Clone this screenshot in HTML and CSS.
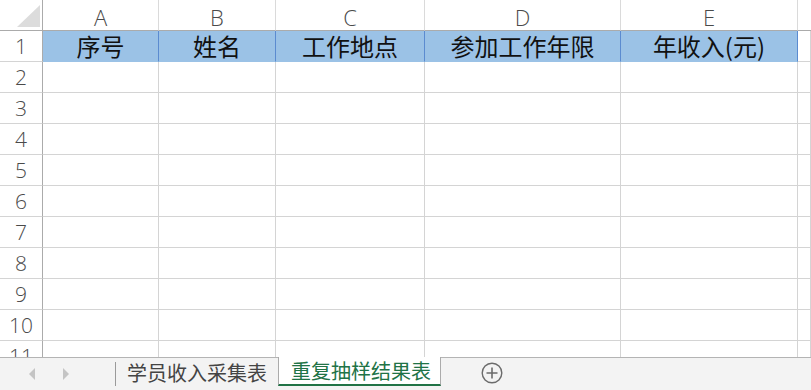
FILE: index.html
```html
<!DOCTYPE html>
<html>
<head>
    <meta charset="utf-8" />
    <title>重复抽样结果表</title>
    <link rel="stylesheet" href="styles.css">
</head>
<body>
    <div id="sheet">
        <div class="cell corner"><span class="tri"></span></div>
        <div class="cell colhead">A</div>
        <div class="cell colhead">B</div>
        <div class="cell colhead">C</div>
        <div class="cell colhead">D</div>
        <div class="cell colhead">E</div>
        <div class="cell colhead last"></div>

        <div class="cell rowhead">1</div>
        <div class="cell title">序号</div>
        <div class="cell title">姓名</div>
        <div class="cell title">工作地点</div>
        <div class="cell title">参加工作年限</div>
        <div class="cell title">年收入(元)</div>
        <div class="cell"></div>

        <div class="cell rowhead">2</div><div class="cell"></div><div class="cell"></div><div class="cell"></div><div class="cell"></div><div class="cell"></div><div class="cell"></div>
        <div class="cell rowhead">3</div><div class="cell"></div><div class="cell"></div><div class="cell"></div><div class="cell"></div><div class="cell"></div><div class="cell"></div>
        <div class="cell rowhead">4</div><div class="cell"></div><div class="cell"></div><div class="cell"></div><div class="cell"></div><div class="cell"></div><div class="cell"></div>
        <div class="cell rowhead">5</div><div class="cell"></div><div class="cell"></div><div class="cell"></div><div class="cell"></div><div class="cell"></div><div class="cell"></div>
        <div class="cell rowhead">6</div><div class="cell"></div><div class="cell"></div><div class="cell"></div><div class="cell"></div><div class="cell"></div><div class="cell"></div>
        <div class="cell rowhead">7</div><div class="cell"></div><div class="cell"></div><div class="cell"></div><div class="cell"></div><div class="cell"></div><div class="cell"></div>
        <div class="cell rowhead">8</div><div class="cell"></div><div class="cell"></div><div class="cell"></div><div class="cell"></div><div class="cell"></div><div class="cell"></div>
        <div class="cell rowhead">9</div><div class="cell"></div><div class="cell"></div><div class="cell"></div><div class="cell"></div><div class="cell"></div><div class="cell"></div>
        <div class="cell rowhead">10</div><div class="cell"></div><div class="cell"></div><div class="cell"></div><div class="cell"></div><div class="cell"></div><div class="cell"></div>
        <div class="cell rowhead">11</div><div class="cell"></div><div class="cell"></div><div class="cell"></div><div class="cell"></div><div class="cell"></div><div class="cell"></div>
    </div>

    <div id="tabbar">
        <div class="nav">
            <span class="arrow left"></span>
            <span class="arrow right"></span>
        </div>
        <span class="sep"></span>
        <div class="tab">学员收入采集表</div>
        <div class="tab active">重复抽样结果表</div>
        <div class="addsheet">
            <svg width="22" height="22" viewBox="0 0 22 22">
                <circle cx="11" cy="11" r="9.8" fill="none" stroke="#6b6b6b" stroke-width="1.4" />
                <path d="M11 5.5 V16.5 M5.5 11 H16.5" stroke="#6b6b6b" stroke-width="1.6" />
            </svg>
        </div>
    </div>
</body>
</html>
```

FILE: styles.css
```css
html, body
{
    margin: 0;
    height: 100%;
    overflow: hidden;
    background: #ffffff;
}

body
{
    display: flex;
    flex-direction: column;
    font-family: 'Noto Sans CJK SC', sans-serif;
}

#sheet
{
    height: 357px;
    overflow: hidden;
    display: grid;
    grid-template-columns: 43px 116px 117px 149px 196px 177px 1fr;
    grid-auto-rows: 31px;
}

.cell
{
    box-sizing: border-box;
    border-right: 1px solid #d4d4d4;
    border-bottom: 1px solid #d4d4d4;
    display: flex;
    align-items: center;
    justify-content: center;
    line-height: 1;
}

.corner
{
    border-right: 1px solid #ababab;
    border-bottom: 1px solid #ababab;
    position: relative;
}

.corner .tri
{
    position: absolute;
    right: 2px;
    bottom: 3px;
    width: 23px;
    height: 22px;
    background: #dcdcdc;
    clip-path: polygon(100% 0, 100% 100%, 0 100%);
}

.colhead
{
    border-bottom: 1px solid #ababab;
    border-right: 1px solid #dadada;
    font: 300 22px/1 'Open Sans', sans-serif;
    color: #4a4a4a;
    padding-top: 3px;
}

.colhead.last
{
    border-right: none;
}

.rowhead
{
    border-right: 1px solid #ababab;
    font: 300 21px/1 'Open Sans', sans-serif;
    color: #4a4a4a;
    padding-top: 1px;
}

.title
{
    background: #9bc2e6;
    border-right: 1px solid #5b8bd0;
    border-bottom: 1px solid #9bc2e6;
    font-size: 24px;
    color: #111111;
}

#tabbar
{
    flex: 1;
    display: flex;
    align-items: stretch;
    background: #f3f3f3;
    border-top: 1px solid #b4b4b4;
}

.nav
{
    width: 115px;
    position: relative;
}

.arrow
{
    position: absolute;
    top: 10px;
    width: 0;
    height: 0;
    border-top: 6px solid transparent;
    border-bottom: 6px solid transparent;
}

.arrow.left
{
    left: 29px;
    border-right: 6px solid #c4c4c4;
}

.arrow.right
{
    left: 63px;
    border-left: 6px solid #c4c4c4;
}

.sep
{
    width: 1px;
    height: 24px;
    margin-top: 4px;
    background: #9a9a9a;
}

.tab
{
    display: flex;
    align-items: center;
    height: 28px;
    padding: 0 11px 0 11px;
    font-size: 20px;
    color: #444444;
}

.tab.active
{
    margin-top: -1px;
    height: 29px;
    box-sizing: border-box;
    padding: 0 9px 0 12px;
    background: #ffffff;
    color: #217346;
    border-left: 1px solid #ababab;
    border-right: 1px solid #ababab;
    border-bottom: 2px solid #217346;
}

.addsheet
{
    margin-left: 40px;
    display: flex;
    align-items: center;
    height: 30px;
}

.addsheet svg
{
    display: block;
}
```
